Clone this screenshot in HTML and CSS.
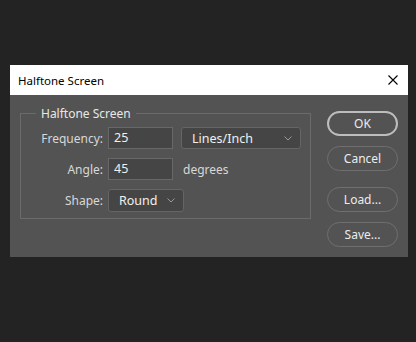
FILE: index.html
```html
<!DOCTYPE html>
<html lang="en">
<head>
    <meta charset="UTF-8">
    <title>Halftone Screen</title>
    <link rel="stylesheet" href="styles.css">
</head>
<body>
    <div class="dialog">
        <div class="title-bar">
            <span class="title">Halftone Screen</span>
            <svg class="close" width="10" height="10" viewBox="0 0 10 10">
                <path d="M0.5 0.5 L9.5 9.5 M9.5 0.5 L0.5 9.5" stroke="#000" stroke-width="1.1" fill="none"/>
            </svg>
        </div>
        <div class="dialog-body">
            <fieldset class="group">
                <legend>Halftone Screen</legend>
                <div class="form-grid">
                    <label>Frequency:</label>
                    <div class="field-row">
                        <div class="text-box">25</div>
                        <div class="drop wide">
                            <span>Lines/Inch</span>
                            <svg width="8" height="5" viewBox="0 0 8 5"><polyline points="0.5,0.5 4,4 7.5,0.5" stroke="#9a9a9a" fill="none"/></svg>
                        </div>
                    </div>
                    <label>Angle:</label>
                    <div class="field-row">
                        <div class="text-box">45</div>
                        <span class="unit">degrees</span>
                    </div>
                    <label>Shape:</label>
                    <div class="field-row">
                        <div class="drop narrow">
                            <span>Round</span>
                            <svg width="8" height="5" viewBox="0 0 8 5"><polyline points="0.5,0.5 4,4 7.5,0.5" stroke="#9a9a9a" fill="none"/></svg>
                        </div>
                    </div>
                </div>
            </fieldset>
            <div class="buttons">
                <button class="btn default">OK</button>
                <button class="btn">Cancel</button>
                <button class="btn spaced">Load...</button>
                <button class="btn">Save...</button>
            </div>
        </div>
    </div>
</body>
</html>
```

FILE: styles.css
```css
body {
    margin: 0;
    background-color: #232323;
    font-family: "Noto Sans", "Open Sans", sans-serif;
    font-size: 12px;
    color: #e4e4e4;
}

.dialog {
    width: 398px;
    margin: 65px 0 0 10px;
    background-color: #535353;
}

.title-bar {
    height: 30px;
    background-color: #fff;
    display: flex;
    align-items: center;
    justify-content: space-between;
    padding: 0 10px 0 8px;
    color: #000;
}

.title {
    font-size: 11.5px;
}

.close {
    display: block;
}

.dialog-body {
    height: 162px;
    display: flex;
    padding: 0 10px;
}

.group {
    width: 291px;
    height: 114px;
    margin: 10px 0 0 0;
    padding: 5px 0 0 0;
    border: 1px solid #6b6b6b;
    box-sizing: border-box;
}

.group legend {
    margin-left: 15px;
    padding: 0 5px;
    font-size: 12px;
    color: #e8e8e8;
}

.form-grid {
    display: grid;
    grid-template-columns: 82px auto;
    column-gap: 5px;
    row-gap: 9px;
    align-items: center;
}

.form-grid label {
    text-align: right;
    color: #d8d8d8;
    font-size: 12px;
}

.field-row {
    display: flex;
    align-items: center;
    gap: 8px;
}

.text-box {
    width: 65px;
    height: 22px;
    box-sizing: border-box;
    border: 1px solid #686868;
    background-color: #454545;
    padding-left: 5px;
    line-height: 20px;
    font-size: 12.5px;
    color: #f0f0f0;
}

.drop {
    height: 22px;
    box-sizing: border-box;
    border: 1px solid #656565;
    border-radius: 3px;
    background-color: #454545;
    display: flex;
    align-items: center;
    justify-content: space-between;
    padding: 0 8px 0 10px;
    font-size: 12.5px;
    color: #f0f0f0;
}

.drop.wide {
    width: 120px;
}

.drop.narrow {
    width: 76px;
    height: 23px;
}

.unit {
    margin-left: 2px;
    font-size: 12px;
    color: #d8d8d8;
}

.buttons {
    margin-left: 16px;
    padding-top: 16px;
    display: flex;
    flex-direction: column;
    gap: 10px;
}

.btn {
    width: 71px;
    height: 25px;
    border: 1px solid #6f6f6f;
    border-radius: 13px;
    background-color: transparent;
    color: #ececec;
    font-family: "Noto Sans", "Open Sans", sans-serif;
    font-size: 12px;
    padding: 0;
}

.btn.default {
    border: 2px solid #bdbdbd;
}

.btn.spaced {
    margin-top: 6px;
}
```
